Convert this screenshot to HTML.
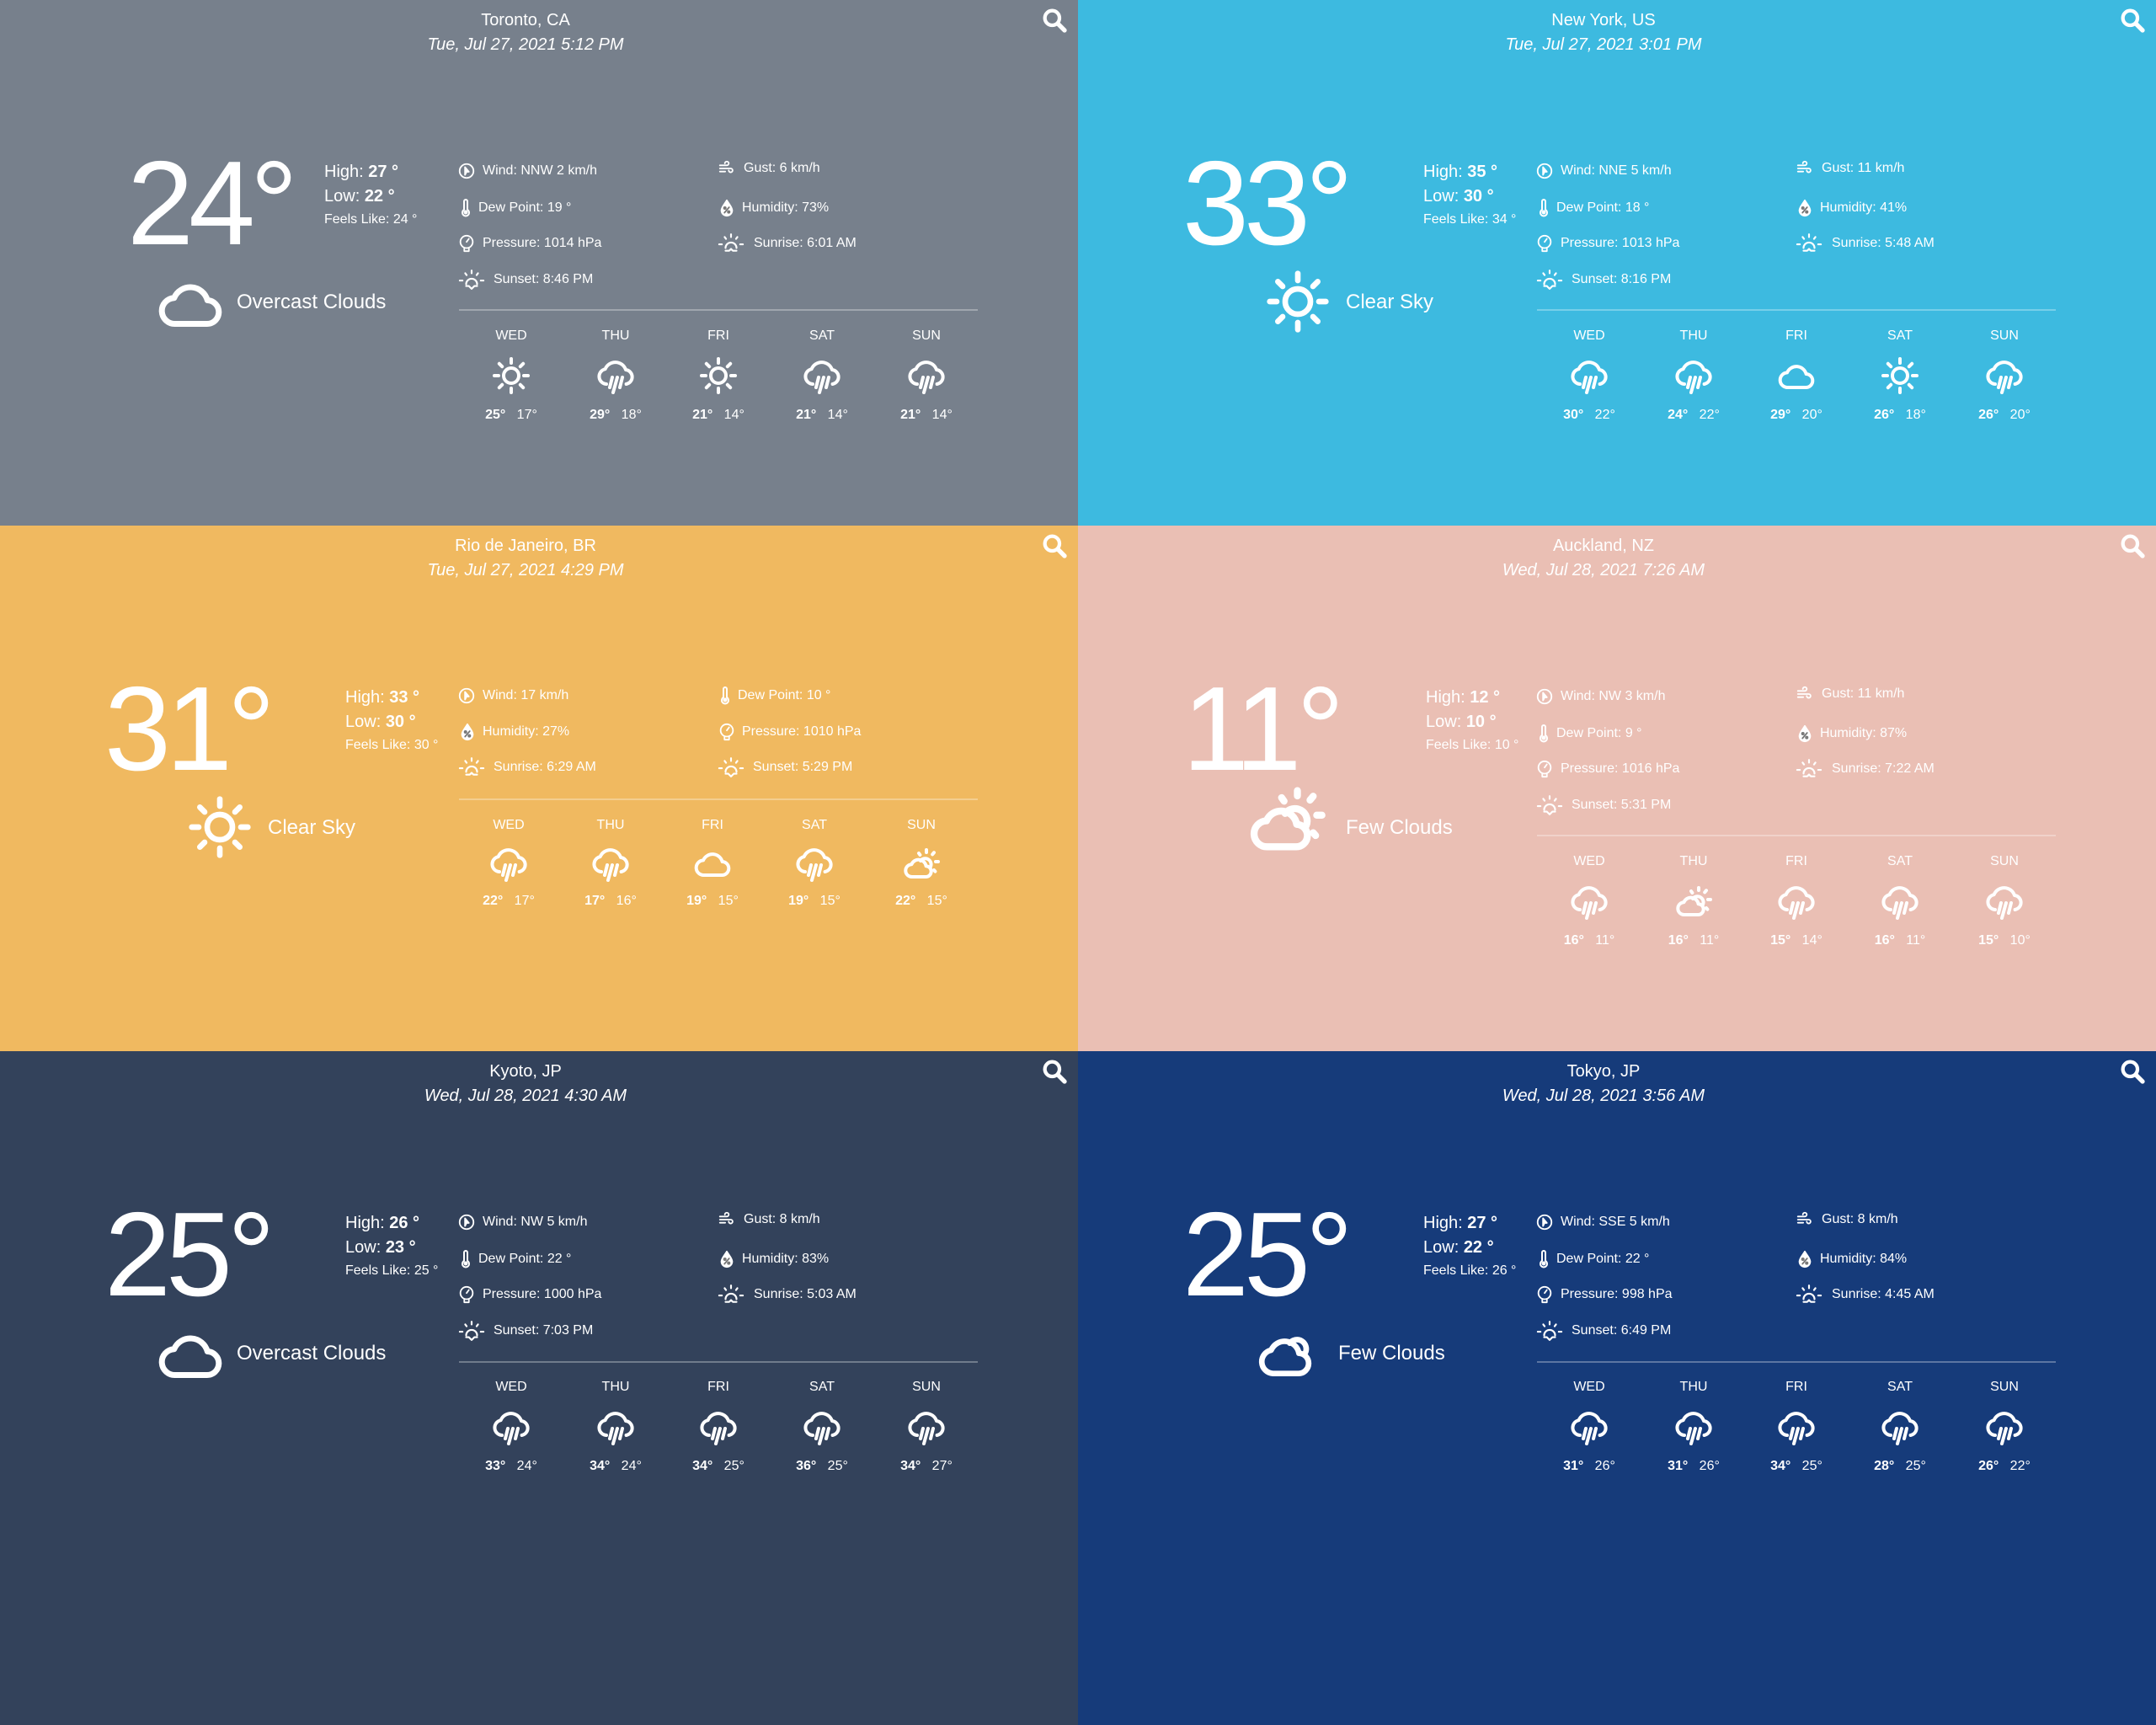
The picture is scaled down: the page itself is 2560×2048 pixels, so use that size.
<!DOCTYPE html>
<html><head><meta charset="utf-8"><style>
*{margin:0;padding:0;box-sizing:border-box}
body{width:2560px;height:2048px;position:relative;overflow:hidden;font-family:"Liberation Sans",sans-serif;color:#fff}
.p{position:absolute;width:1280px;overflow:hidden}
.a{position:absolute;white-space:nowrap}
.city{left:424px;width:400px;text-align:center;font-size:20px;line-height:20px}
.ct{top:14px}.dt{top:43px;font-style:italic}
.big{font-size:142px;line-height:142px;top:171px;letter-spacing:-6px;font-weight:300}
.hl{font-size:20px;line-height:20px}
.fl{font-size:16px;line-height:16px}
.cond{font-size:24px;line-height:24px;top:347px}
.d{font-size:16px;line-height:16px}
.ic{position:absolute;fill:none;stroke:#fff;stroke-width:2;stroke-linecap:round;stroke-linejoin:round}
.div{position:absolute;left:545px;width:616px;height:2px;background:rgba(255,255,255,.3)}
.fc{position:absolute;width:120px;text-align:center;font-size:16px;line-height:16px}
.fc svg{display:block;margin:0 auto}
</style></head><body>
<svg width="0" height="0" style="position:absolute">
<defs>
<symbol id="sun" viewBox="0 0 24 24"><circle cx="12" cy="12" r="4.5"/><path d="M12 2v2.5M12 19.5V22M2 12h2.5M19.5 12H22M4.9 4.9l1.7 1.7M17.4 17.4l1.7 1.7M4.9 19.1l1.7-1.7M17.4 6.6l1.7-1.7"/></symbol>
<symbol id="rain" viewBox="0 0 24 24"><path d="M6.5 17A4.5 4.5 0 0 1 5.8 8.1 6.5 6.5 0 0 1 18 8.5a4.3 4.3 0 0 1 .3 8.5"/><path d="M10 13l-1.5 6M13 13l-2.5 9M16 13l-1.5 6"/></symbol>
<symbol id="cloud" viewBox="0 0 24 24"><path d="M7 19h10.5a4 4 0 0 0 .3-8A6 6 0 0 0 6.5 10.2 4.4 4.4 0 0 0 7 19z"/></symbol>
<symbol id="few" viewBox="0 0 24 24"><path d="M6.5 20h8a3.2 3.2 0 0 0 .3-6.4A4.5 4.5 0 0 0 6.2 12.6 3.7 3.7 0 0 0 6.5 20z"/><path d="M11.5 10.5a3.5 3.5 0 0 1 6 3.5"/><path d="M15 4v1.5M10.5 6l.7 1M19.5 5.6l-.9 1.1M20.5 11h1.5M19.5 16l.7.8"/></symbol>
<symbol id="search" viewBox="0 0 24 24"><circle cx="10" cy="10" r="6.5" stroke-width="3.2"/><path d="M15 15l6 6" stroke-width="4"/></symbol>
<symbol id="wind" viewBox="0 0 24 24"><circle cx="12" cy="12" r="9"/><path d="M10 7l5 6-3 0-2 4z" fill="#fff"/></symbol>
<symbol id="therm" viewBox="0 0 24 24"><path d="M10 14V4a2 2 0 0 1 4 0v10a4 4 0 1 1-4 0z"/><circle cx="12" cy="17" r="1.5" fill="#fff"/></symbol>
<symbol id="press" viewBox="0 0 24 24"><circle cx="12" cy="10" r="8"/><path d="M12 10l3-4M9 18v4h6v-4"/></symbol>
<symbol id="gust" viewBox="0 0 24 24"><path d="M3 8h9a2.5 2.5 0 1 0-2.5-2.5M3 12h14a2.5 2.5 0 1 1-2.5 2.5M3 16h7"/></symbol>
<symbol id="hum" viewBox="0 0 24 24"><path d="M12 2C9 7 5 11 5 15a7 7 0 0 0 14 0c0-4-4-8-7-13z" fill="#fff"/><path d="M9 18l6-7" stroke="#777"/><circle cx="9.5" cy="12" r="1.2" stroke="#777"/><circle cx="14.5" cy="17" r="1.2" stroke="#777"/></symbol>
<symbol id="rise" viewBox="0 0 30 24"><path d="M9 17a6 6 0 0 1 12 0M15 2v3M8 5l1.5 2M22 5l-1.5 2M2 13h3M25 13h3M9 20h4l2-2 2 2h4"/></symbol>
<symbol id="set" viewBox="0 0 30 24"><path d="M9 17a6 6 0 0 1 12 0M15 2v3M8 5l1.5 2M22 5l-1.5 2M2 13h3M25 13h3M9 19h3l3 3 3-3h3"/></symbol>
</defs></svg>

<!-- Toronto -->
<div class="p" style="left:0;top:0;height:624px;background:#77808c">
<div class="a city ct">Toronto, CA</div><div class="a city dt">Tue, Jul 27, 2021 5:12 PM</div>
<svg class="ic" style="left:1236px;top:8px" width="32" height="32"><use href="#search"/></svg>
<div class="a big" style="left:151px">24°</div>
<div class="a hl" style="left:385px;top:194px">High: <b>27 °</b></div>
<div class="a hl" style="left:385px;top:223px">Low: <b>22 °</b></div>
<div class="a fl" style="left:385px;top:253px">Feels Like: 24 °</div>
<svg class="ic" style="left:184px;top:318px" width="84" height="84" stroke-width="1.6"><use href="#cloud"/></svg>
<div class="a cond" style="left:281px">Overcast Clouds</div>
<svg class="ic" style="left:543px;top:192px" width="22" height="22"><use href="#wind"/></svg><div class="a d" style="left:573px;top:195px">Wind: NNW 2 km/h</div>
<svg class="ic" style="left:541px;top:234px" width="24" height="26"><use href="#therm"/></svg><div class="a d" style="left:568px;top:239px">Dew Point: 19 °</div>
<svg class="ic" style="left:543px;top:277px" width="22" height="24"><use href="#press"/></svg><div class="a d" style="left:573px;top:281px">Pressure: 1014 hPa</div>
<svg class="ic" style="left:543px;top:319px" width="34" height="26"><use href="#set"/></svg><div class="a d" style="left:586px;top:324px">Sunset: 8:46 PM</div>
<svg class="ic" style="left:851px;top:189px" width="24" height="22"><use href="#gust"/></svg><div class="a d" style="left:883px;top:192px">Gust: 6 km/h</div>
<svg class="ic" style="left:852px;top:235px" width="22" height="24"><use href="#hum"/></svg><div class="a d" style="left:881px;top:239px">Humidity: 73%</div>
<svg class="ic" style="left:851px;top:276px" width="34" height="26"><use href="#rise"/></svg><div class="a d" style="left:895px;top:281px">Sunrise: 6:01 AM</div>
<div class="div" style="top:367px"></div>
<div class="fc" style="left:547px;top:391px">WED<svg class="ic" style="position:relative;margin:15px auto 0" width="48" height="48"><use href="#sun"/></svg><div style="margin-top:15px"><b>25°</b>&nbsp;&nbsp; 17°</div></div>
<div class="fc" style="left:671px;top:391px">THU<svg class="ic" style="position:relative;margin:15px auto 0" width="48" height="48"><use href="#rain"/></svg><div style="margin-top:15px"><b>29°</b>&nbsp;&nbsp; 18°</div></div>
<div class="fc" style="left:793px;top:391px">FRI<svg class="ic" style="position:relative;margin:15px auto 0" width="48" height="48"><use href="#sun"/></svg><div style="margin-top:15px"><b>21°</b>&nbsp;&nbsp; 14°</div></div>
<div class="fc" style="left:916px;top:391px">SAT<svg class="ic" style="position:relative;margin:15px auto 0" width="48" height="48"><use href="#rain"/></svg><div style="margin-top:15px"><b>21°</b>&nbsp;&nbsp; 14°</div></div>
<div class="fc" style="left:1040px;top:391px">SUN<svg class="ic" style="position:relative;margin:15px auto 0" width="48" height="48"><use href="#rain"/></svg><div style="margin-top:15px"><b>21°</b>&nbsp;&nbsp; 14°</div></div>
</div>

<!-- New York -->
<div class="p" style="left:1280px;top:0;height:624px;background:#3dbae0">
<div class="a city ct">New York, US</div><div class="a city dt">Tue, Jul 27, 2021 3:01 PM</div>
<svg class="ic" style="left:1236px;top:8px" width="32" height="32"><use href="#search"/></svg>
<div class="a big" style="left:124px">33°</div>
<div class="a hl" style="left:410px;top:194px">High: <b>35 °</b></div>
<div class="a hl" style="left:410px;top:223px">Low: <b>30 °</b></div>
<div class="a fl" style="left:410px;top:253px">Feels Like: 34 °</div>
<svg class="ic" style="left:221px;top:318px" width="80" height="80"><use href="#sun"/></svg>
<div class="a cond" style="left:318px">Clear Sky</div>
<svg class="ic" style="left:543px;top:192px" width="22" height="22"><use href="#wind"/></svg><div class="a d" style="left:573px;top:195px">Wind: NNE 5 km/h</div>
<svg class="ic" style="left:541px;top:234px" width="24" height="26"><use href="#therm"/></svg><div class="a d" style="left:568px;top:239px">Dew Point: 18 °</div>
<svg class="ic" style="left:543px;top:277px" width="22" height="24"><use href="#press"/></svg><div class="a d" style="left:573px;top:281px">Pressure: 1013 hPa</div>
<svg class="ic" style="left:543px;top:319px" width="34" height="26"><use href="#set"/></svg><div class="a d" style="left:586px;top:324px">Sunset: 8:16 PM</div>
<svg class="ic" style="left:851px;top:189px" width="24" height="22"><use href="#gust"/></svg><div class="a d" style="left:883px;top:192px">Gust: 11 km/h</div>
<svg class="ic" style="left:852px;top:235px" width="22" height="24"><use href="#hum"/></svg><div class="a d" style="left:881px;top:239px">Humidity: 41%</div>
<svg class="ic" style="left:851px;top:276px" width="34" height="26"><use href="#rise"/></svg><div class="a d" style="left:895px;top:281px">Sunrise: 5:48 AM</div>
<div class="div" style="top:367px"></div>
<div class="fc" style="left:547px;top:391px">WED<svg class="ic" style="position:relative;margin:15px auto 0" width="48" height="48"><use href="#rain"/></svg><div style="margin-top:15px"><b>30°</b>&nbsp;&nbsp; 22°</div></div>
<div class="fc" style="left:671px;top:391px">THU<svg class="ic" style="position:relative;margin:15px auto 0" width="48" height="48"><use href="#rain"/></svg><div style="margin-top:15px"><b>24°</b>&nbsp;&nbsp; 22°</div></div>
<div class="fc" style="left:793px;top:391px">FRI<svg class="ic" style="position:relative;margin:15px auto 0" width="48" height="48"><use href="#cloud"/></svg><div style="margin-top:15px"><b>29°</b>&nbsp;&nbsp; 20°</div></div>
<div class="fc" style="left:916px;top:391px">SAT<svg class="ic" style="position:relative;margin:15px auto 0" width="48" height="48"><use href="#sun"/></svg><div style="margin-top:15px"><b>26°</b>&nbsp;&nbsp; 18°</div></div>
<div class="fc" style="left:1040px;top:391px">SUN<svg class="ic" style="position:relative;margin:15px auto 0" width="48" height="48"><use href="#rain"/></svg><div style="margin-top:15px"><b>26°</b>&nbsp;&nbsp; 20°</div></div>
</div>

<!-- Rio -->
<div class="p" style="left:0;top:624px;height:624px;background:#f0b960">
<div class="a city ct">Rio de Janeiro, BR</div><div class="a city dt">Tue, Jul 27, 2021 4:29 PM</div>
<svg class="ic" style="left:1236px;top:8px" width="32" height="32"><use href="#search"/></svg>
<div class="a big" style="left:124px">31°</div>
<div class="a hl" style="left:410px;top:194px">High: <b>33 °</b></div>
<div class="a hl" style="left:410px;top:223px">Low: <b>30 °</b></div>
<div class="a fl" style="left:410px;top:253px">Feels Like: 30 °</div>
<svg class="ic" style="left:221px;top:318px" width="80" height="80"><use href="#sun"/></svg>
<div class="a cond" style="left:318px">Clear Sky</div>
<svg class="ic" style="left:543px;top:191px" width="22" height="22"><use href="#wind"/></svg><div class="a d" style="left:573px;top:194px">Wind: 17 km/h</div>
<svg class="ic" style="left:544px;top:233px" width="22" height="24"><use href="#hum"/></svg><div class="a d" style="left:573px;top:237px">Humidity: 27%</div>
<svg class="ic" style="left:543px;top:274px" width="34" height="26"><use href="#rise"/></svg><div class="a d" style="left:586px;top:279px">Sunrise: 6:29 AM</div>
<svg class="ic" style="left:849px;top:189px" width="24" height="26"><use href="#therm"/></svg><div class="a d" style="left:876px;top:194px">Dew Point: 10 °</div>
<svg class="ic" style="left:852px;top:233px" width="22" height="24"><use href="#press"/></svg><div class="a d" style="left:881px;top:237px">Pressure: 1010 hPa</div>
<svg class="ic" style="left:851px;top:274px" width="34" height="26"><use href="#set"/></svg><div class="a d" style="left:894px;top:279px">Sunset: 5:29 PM</div>
<div class="div" style="top:324px"></div>
<div class="fc" style="left:544px;top:348px">WED<svg class="ic" style="position:relative;margin:13px auto 0" width="48" height="48"><use href="#rain"/></svg><div style="margin-top:13px"><b>22°</b>&nbsp;&nbsp; 17°</div></div>
<div class="fc" style="left:665px;top:348px">THU<svg class="ic" style="position:relative;margin:13px auto 0" width="48" height="48"><use href="#rain"/></svg><div style="margin-top:13px"><b>17°</b>&nbsp;&nbsp; 16°</div></div>
<div class="fc" style="left:786px;top:348px">FRI<svg class="ic" style="position:relative;margin:13px auto 0" width="48" height="48"><use href="#cloud"/></svg><div style="margin-top:13px"><b>19°</b>&nbsp;&nbsp; 15°</div></div>
<div class="fc" style="left:907px;top:348px">SAT<svg class="ic" style="position:relative;margin:13px auto 0" width="48" height="48"><use href="#rain"/></svg><div style="margin-top:13px"><b>19°</b>&nbsp;&nbsp; 15°</div></div>
<div class="fc" style="left:1034px;top:348px">SUN<svg class="ic" style="position:relative;margin:13px auto 0" width="48" height="48"><use href="#few"/></svg><div style="margin-top:13px"><b>22°</b>&nbsp;&nbsp; 15°</div></div>
</div>

<!-- Auckland -->
<div class="p" style="left:1280px;top:624px;height:624px;background:#eabfb4">
<div class="a city ct">Auckland, NZ</div><div class="a city dt">Wed, Jul 28, 2021 7:26 AM</div>
<svg class="ic" style="left:1236px;top:8px" width="32" height="32"><use href="#search"/></svg>
<div class="a big" style="left:124px">11°</div>
<div class="a hl" style="left:413px;top:194px">High: <b>12 °</b></div>
<div class="a hl" style="left:413px;top:223px">Low: <b>10 °</b></div>
<div class="a fl" style="left:413px;top:253px">Feels Like: 10 °</div>
<svg class="ic" style="left:198px;top:298px" width="100" height="100" stroke-width="1.7"><use href="#few"/></svg>
<div class="a cond" style="left:318px">Few Clouds</div>
<svg class="ic" style="left:543px;top:192px" width="22" height="22"><use href="#wind"/></svg><div class="a d" style="left:573px;top:195px">Wind: NW 3 km/h</div>
<svg class="ic" style="left:541px;top:234px" width="24" height="26"><use href="#therm"/></svg><div class="a d" style="left:568px;top:239px">Dew Point: 9 °</div>
<svg class="ic" style="left:543px;top:277px" width="22" height="24"><use href="#press"/></svg><div class="a d" style="left:573px;top:281px">Pressure: 1016 hPa</div>
<svg class="ic" style="left:543px;top:319px" width="34" height="26"><use href="#set"/></svg><div class="a d" style="left:586px;top:324px">Sunset: 5:31 PM</div>
<svg class="ic" style="left:851px;top:189px" width="24" height="22"><use href="#gust"/></svg><div class="a d" style="left:883px;top:192px">Gust: 11 km/h</div>
<svg class="ic" style="left:852px;top:235px" width="22" height="24"><use href="#hum"/></svg><div class="a d" style="left:881px;top:239px">Humidity: 87%</div>
<svg class="ic" style="left:851px;top:276px" width="34" height="26"><use href="#rise"/></svg><div class="a d" style="left:895px;top:281px">Sunrise: 7:22 AM</div>
<div class="div" style="top:367px"></div>
<div class="fc" style="left:547px;top:391px">WED<svg class="ic" style="position:relative;margin:15px auto 0" width="48" height="48"><use href="#rain"/></svg><div style="margin-top:15px"><b>16°</b>&nbsp;&nbsp; 11°</div></div>
<div class="fc" style="left:671px;top:391px">THU<svg class="ic" style="position:relative;margin:15px auto 0" width="48" height="48"><use href="#few"/></svg><div style="margin-top:15px"><b>16°</b>&nbsp;&nbsp; 11°</div></div>
<div class="fc" style="left:793px;top:391px">FRI<svg class="ic" style="position:relative;margin:15px auto 0" width="48" height="48"><use href="#rain"/></svg><div style="margin-top:15px"><b>15°</b>&nbsp;&nbsp; 14°</div></div>
<div class="fc" style="left:916px;top:391px">SAT<svg class="ic" style="position:relative;margin:15px auto 0" width="48" height="48"><use href="#rain"/></svg><div style="margin-top:15px"><b>16°</b>&nbsp;&nbsp; 11°</div></div>
<div class="fc" style="left:1040px;top:391px">SUN<svg class="ic" style="position:relative;margin:15px auto 0" width="48" height="48"><use href="#rain"/></svg><div style="margin-top:15px"><b>15°</b>&nbsp;&nbsp; 10°</div></div>
</div>

<!-- Kyoto -->
<div class="p" style="left:0;top:1248px;height:800px;background:#33425b">
<div class="a city ct">Kyoto, JP</div><div class="a city dt">Wed, Jul 28, 2021 4:30 AM</div>
<svg class="ic" style="left:1236px;top:8px" width="32" height="32"><use href="#search"/></svg>
<div class="a big" style="left:124px">25°</div>
<div class="a hl" style="left:410px;top:194px">High: <b>26 °</b></div>
<div class="a hl" style="left:410px;top:223px">Low: <b>23 °</b></div>
<div class="a fl" style="left:410px;top:253px">Feels Like: 25 °</div>
<svg class="ic" style="left:184px;top:318px" width="84" height="84" stroke-width="1.6"><use href="#cloud"/></svg>
<div class="a cond" style="left:281px">Overcast Clouds</div>
<svg class="ic" style="left:543px;top:192px" width="22" height="22"><use href="#wind"/></svg><div class="a d" style="left:573px;top:195px">Wind: NW 5 km/h</div>
<svg class="ic" style="left:541px;top:234px" width="24" height="26"><use href="#therm"/></svg><div class="a d" style="left:568px;top:239px">Dew Point: 22 °</div>
<svg class="ic" style="left:543px;top:277px" width="22" height="24"><use href="#press"/></svg><div class="a d" style="left:573px;top:281px">Pressure: 1000 hPa</div>
<svg class="ic" style="left:543px;top:319px" width="34" height="26"><use href="#set"/></svg><div class="a d" style="left:586px;top:324px">Sunset: 7:03 PM</div>
<svg class="ic" style="left:851px;top:189px" width="24" height="22"><use href="#gust"/></svg><div class="a d" style="left:883px;top:192px">Gust: 8 km/h</div>
<svg class="ic" style="left:852px;top:235px" width="22" height="24"><use href="#hum"/></svg><div class="a d" style="left:881px;top:239px">Humidity: 83%</div>
<svg class="ic" style="left:851px;top:276px" width="34" height="26"><use href="#rise"/></svg><div class="a d" style="left:895px;top:281px">Sunrise: 5:03 AM</div>
<div class="div" style="top:368px"></div>
<div class="fc" style="left:547px;top:391px">WED<svg class="ic" style="position:relative;margin:15px auto 0" width="48" height="48"><use href="#rain"/></svg><div style="margin-top:15px"><b>33°</b>&nbsp;&nbsp; 24°</div></div>
<div class="fc" style="left:671px;top:391px">THU<svg class="ic" style="position:relative;margin:15px auto 0" width="48" height="48"><use href="#rain"/></svg><div style="margin-top:15px"><b>34°</b>&nbsp;&nbsp; 24°</div></div>
<div class="fc" style="left:793px;top:391px">FRI<svg class="ic" style="position:relative;margin:15px auto 0" width="48" height="48"><use href="#rain"/></svg><div style="margin-top:15px"><b>34°</b>&nbsp;&nbsp; 25°</div></div>
<div class="fc" style="left:916px;top:391px">SAT<svg class="ic" style="position:relative;margin:15px auto 0" width="48" height="48"><use href="#rain"/></svg><div style="margin-top:15px"><b>36°</b>&nbsp;&nbsp; 25°</div></div>
<div class="fc" style="left:1040px;top:391px">SUN<svg class="ic" style="position:relative;margin:15px auto 0" width="48" height="48"><use href="#rain"/></svg><div style="margin-top:15px"><b>34°</b>&nbsp;&nbsp; 27°</div></div>
</div>

<!-- Tokyo -->
<div class="p" style="left:1280px;top:1248px;height:800px;background:#163b7a">
<div class="a city ct">Tokyo, JP</div><div class="a city dt">Wed, Jul 28, 2021 3:56 AM</div>
<svg class="ic" style="left:1236px;top:8px" width="32" height="32"><use href="#search"/></svg>
<div class="a big" style="left:124px">25°</div>
<div class="a hl" style="left:410px;top:194px">High: <b>27 °</b></div>
<div class="a hl" style="left:410px;top:223px">Low: <b>22 °</b></div>
<div class="a fl" style="left:410px;top:253px">Feels Like: 26 °</div>
<svg class="ic" style="left:206px;top:316px" width="84" height="80" stroke-width="1.7" viewBox="0 0 24 24"><path d="M7 20h9a3.6 3.6 0 0 0 .3-7.2A5.2 5.2 0 0 0 6.4 11.7 4.2 4.2 0 0 0 7 20z"/><path d="M13 9.2a3.3 3.3 0 0 1 5.6 3.4"/></svg>
<div class="a cond" style="left:309px">Few Clouds</div>
<svg class="ic" style="left:543px;top:192px" width="22" height="22"><use href="#wind"/></svg><div class="a d" style="left:573px;top:195px">Wind: SSE 5 km/h</div>
<svg class="ic" style="left:541px;top:234px" width="24" height="26"><use href="#therm"/></svg><div class="a d" style="left:568px;top:239px">Dew Point: 22 °</div>
<svg class="ic" style="left:543px;top:277px" width="22" height="24"><use href="#press"/></svg><div class="a d" style="left:573px;top:281px">Pressure: 998 hPa</div>
<svg class="ic" style="left:543px;top:319px" width="34" height="26"><use href="#set"/></svg><div class="a d" style="left:586px;top:324px">Sunset: 6:49 PM</div>
<svg class="ic" style="left:851px;top:189px" width="24" height="22"><use href="#gust"/></svg><div class="a d" style="left:883px;top:192px">Gust: 8 km/h</div>
<svg class="ic" style="left:852px;top:235px" width="22" height="24"><use href="#hum"/></svg><div class="a d" style="left:881px;top:239px">Humidity: 84%</div>
<svg class="ic" style="left:851px;top:276px" width="34" height="26"><use href="#rise"/></svg><div class="a d" style="left:895px;top:281px">Sunrise: 4:45 AM</div>
<div class="div" style="top:368px"></div>
<div class="fc" style="left:547px;top:391px">WED<svg class="ic" style="position:relative;margin:15px auto 0" width="48" height="48"><use href="#rain"/></svg><div style="margin-top:15px"><b>31°</b>&nbsp;&nbsp; 26°</div></div>
<div class="fc" style="left:671px;top:391px">THU<svg class="ic" style="position:relative;margin:15px auto 0" width="48" height="48"><use href="#rain"/></svg><div style="margin-top:15px"><b>31°</b>&nbsp;&nbsp; 26°</div></div>
<div class="fc" style="left:793px;top:391px">FRI<svg class="ic" style="position:relative;margin:15px auto 0" width="48" height="48"><use href="#rain"/></svg><div style="margin-top:15px"><b>34°</b>&nbsp;&nbsp; 25°</div></div>
<div class="fc" style="left:916px;top:391px">SAT<svg class="ic" style="position:relative;margin:15px auto 0" width="48" height="48"><use href="#rain"/></svg><div style="margin-top:15px"><b>28°</b>&nbsp;&nbsp; 25°</div></div>
<div class="fc" style="left:1040px;top:391px">SUN<svg class="ic" style="position:relative;margin:15px auto 0" width="48" height="48"><use href="#rain"/></svg><div style="margin-top:15px"><b>26°</b>&nbsp;&nbsp; 22°</div></div>
</div>
</body></html>
